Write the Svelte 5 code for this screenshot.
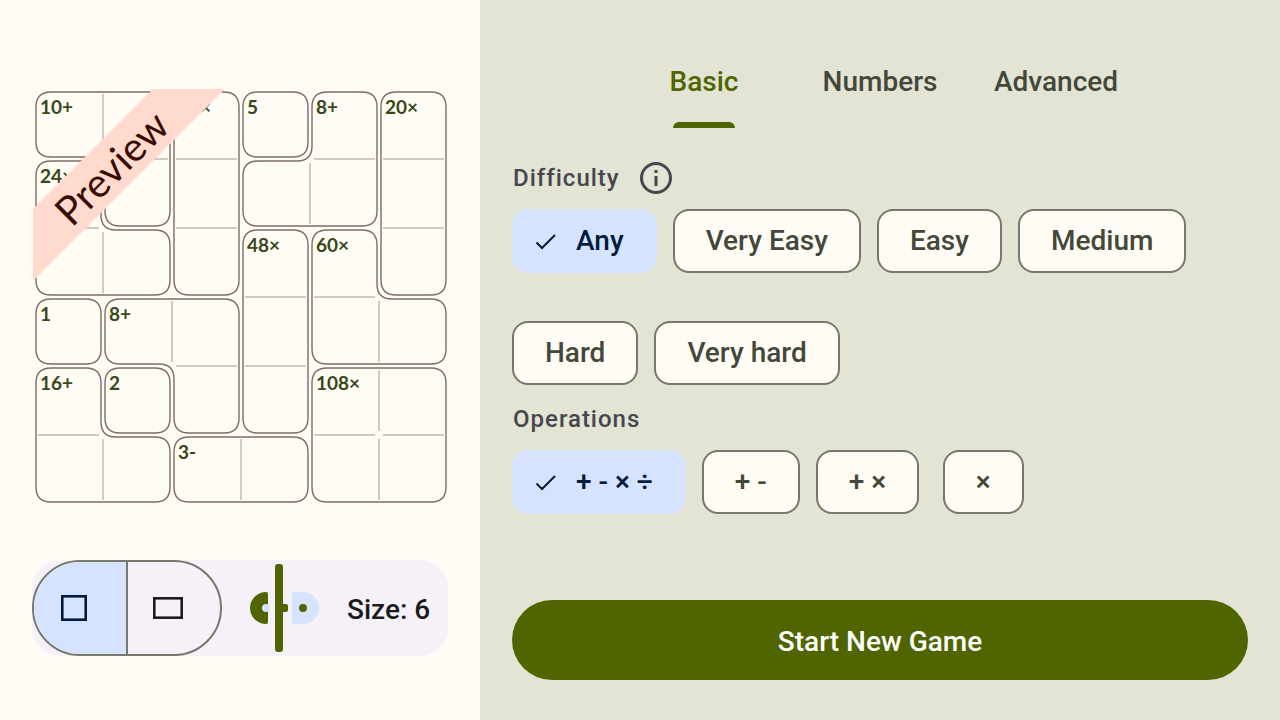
<script>
  const STEP = 69;
  const RADIUS = 15;

  // Cage corners in half-cell units: even = near edge of a cell, odd = far edge.
  const cages = [
    { label: '10+', at: [0, 0], corners: [[0, 0], [3, 0], [3, 3], [2, 3], [2, 1], [0, 1]] },
    { label: '24×', at: [0, 1], corners: [[0, 2], [1, 2], [1, 4], [3, 4], [3, 5], [0, 5]] },
    { label: '40×', at: [2, 0], corners: [[4, 0], [5, 0], [5, 5], [4, 5]] },
    { label: '5', at: [3, 0], corners: [[6, 0], [7, 0], [7, 1], [6, 1]] },
    { label: '8+', at: [4, 0], corners: [[8, 0], [9, 0], [9, 3], [6, 3], [6, 2], [8, 2]] },
    { label: '20×', at: [5, 0], corners: [[10, 0], [11, 0], [11, 5], [10, 5]] },
    { label: '48×', at: [3, 2], corners: [[6, 4], [7, 4], [7, 9], [6, 9]] },
    { label: '60×', at: [4, 2], corners: [[8, 4], [9, 4], [9, 6], [11, 6], [11, 7], [8, 7]] },
    { label: '1', at: [0, 3], corners: [[0, 6], [1, 6], [1, 7], [0, 7]] },
    { label: '8+', at: [1, 3], corners: [[2, 6], [5, 6], [5, 9], [4, 9], [4, 7], [2, 7]] },
    { label: '16+', at: [0, 4], corners: [[0, 8], [1, 8], [1, 10], [3, 10], [3, 11], [0, 11]] },
    { label: '2', at: [1, 4], corners: [[2, 8], [3, 8], [3, 9], [2, 9]] },
    { label: '108×', at: [4, 4], corners: [[8, 8], [11, 8], [11, 11], [8, 11]] },
    { label: '3-', at: [2, 5], corners: [[4, 10], [7, 10], [7, 11], [4, 11]] }
  ];
  const verticals = [[1, 0], [1, 2], [4, 1], [2, 3], [5, 3], [5, 4], [5, 5], [1, 5], [3, 5]];
  const horizontals = [
    [1, 1], [2, 1], [2, 2], [0, 2], [4, 1], [5, 1], [5, 2],
    [3, 3], [3, 4], [4, 3], [2, 4], [0, 5], [4, 5], [5, 5]
  ];

  const edge = (n) => Math.floor(n / 2) * STEP + (n % 2 ? 69 : 4);

  function outline(corners) {
    const pts = corners.map(([x, y]) => [edge(x), edge(y)]);
    const toward = (a, b) => [
      a[0] + Math.sign(b[0] - a[0]) * RADIUS,
      a[1] + Math.sign(b[1] - a[1]) * RADIUS
    ];
    return (
      pts
        .map((p, i) => {
          const before = toward(p, pts[(i + pts.length - 1) % pts.length]);
          const after = toward(p, pts[(i + 1) % pts.length]);
          return `${i ? 'L' : 'M'}${before} Q${p} ${after}`;
        })
        .join(' ') + ' Z'
    );
  }

  const tabs = ['Basic', 'Numbers', 'Advanced'];
  const difficulties = ['Any', 'Very Easy', 'Easy', 'Medium', 'Hard', 'Very hard'];
  const operations = ['+ - × ÷', '+ -', '+ ×', '×'];

  let tab = $state('Basic');
  let difficulty = $state('Any');
  let operation = $state('+ - × ÷');
  let shape = $state('square');
  let size = $state(6);
</script>

{#snippet chip(text, selected, choose)}
  <li>
    <button class="chip" class:selected aria-pressed={selected} onclick={choose}>
      {#if selected}
        <svg class="check" viewBox="0 0 36 36" aria-hidden="true">
          <path d="M8.500 19.500 L14 25 L27 12" />
        </svg>
      {/if}
      {text}
    </button>
  </li>
{/snippet}

<main>
  <section class="preview">
    <svg class="board" viewBox="0 0 416 416" role="img" aria-label="Preview">
      {#each verticals as [c, r]}
        <path class="grid" d="M{2 + c * STEP} {6 + r * STEP} v61" />
      {/each}
      {#each horizontals as [c, r]}
        <path class="grid" d="M{6 + c * STEP} {2 + r * STEP} h61" />
      {/each}
      {#each cages as cage}
        <path class="cage" d={outline(cage.corners)} />
        <text class="clue" x={8 + cage.at[0] * STEP} y={26 + cage.at[1] * STEP}>{cage.label}</text>
      {/each}
      <path class="ribbon" d="M121 1 H193 L1 193 V121 Z" />
      <text class="banner" transform="translate(40 140) rotate(-45)">Preview</text>
    </svg>

    <div class="tools">
      <div class="shapes">
        <button class:on={shape === 'square'} aria-label="Square" onclick={() => (shape = 'square')}>
          <svg viewBox="0 0 32 32" aria-hidden="true"><rect x="4.300" y="4.300" width="23.400" height="23.400" /></svg>
        </button>
        <button class:on={shape === 'wide'} aria-label="Rectangle" onclick={() => (shape = 'wide')}>
          <svg viewBox="0 0 32 32" aria-hidden="true"><rect x="2.300" y="6.300" width="27.400" height="19.400" /></svg>
        </button>
      </div>
      <div class="slider">
        <svg viewBox="0 0 72 96" aria-hidden="true">
          <path class="dark" d="M16 32 H16 Q18 32 18 34 V62 Q18 64 16 64 A16 16 0 0 1 16 32 Z" />
          <circle class="light" cx="16" cy="48" r="4" />
          <path class="light" d="M44 32 H53 A16 16 0 0 1 53 64 H44 Q42 64 42 62 V34 Q42 32 44 32 Z" />
          <rect class="dark" x="30" y="44" width="8" height="8" rx="2" />
          <circle class="dark" cx="53" cy="48" r="4" />
          <rect class="dark" x="25" y="4" width="8" height="88" rx="3" />
        </svg>
        <input id="size" type="range" min="3" max="9" bind:value={size} />
      </div>
      <label for="size">Size: {size}</label>
    </div>
  </section>

  <section class="options">
    <div class="tabs" role="tablist">
      {#each tabs as name}
        <button role="tab" class:active={tab === name} aria-selected={tab === name} onclick={() => (tab = name)}>
          {name}
        </button>
      {/each}
    </div>

    <div class="heading">
      <h2>Difficulty</h2>
      <button class="info" aria-label="About difficulty">
        <svg viewBox="0 0 32 32" aria-hidden="true">
          <circle class="ring" cx="16" cy="16" r="14.500" />
          <rect x="14.500" y="14" width="3" height="10" />
          <rect x="14.500" y="8" width="3" height="3" />
        </svg>
      </button>
    </div>
    <ul class="chips">
      {#each difficulties as name}
        {@render chip(name, difficulty === name, () => (difficulty = name))}
      {/each}
    </ul>

    <div class="heading second">
      <h2>Operations</h2>
    </div>
    <ul class="chips">
      {#each operations as name}
        {@render chip(name, operation === name, () => (operation = name))}
      {/each}
    </ul>

    <button class="start">Start New Game</button>
  </section>
</main>

<style>
  :global(body) {
    margin: 0;
    background: #fffcf5;
  }

  main {
    display: grid;
    grid-template-columns: minmax(0, 3fr) minmax(0, 5fr);
    min-height: 100vh;
    font-family: Roboto, sans-serif;
    font-size: 28px;
    font-weight: 500;
    line-height: 40px;
  }

  button {
    margin: 0;
    padding: 0;
    border: 0;
    background: none;
    color: inherit;
    font: inherit;
    cursor: pointer;
  }

  svg {
    display: block;
  }

  .preview {
    display: flex;
    flex-direction: column;
    justify-content: space-between;
    gap: 32px;
    padding: 88px 32px 64px;
  }

  .board {
    width: 100%;
  }

  .grid {
    fill: none;
    stroke: #d2c8c4;
    stroke-width: 2;
  }

  .cage {
    fill: none;
    stroke: #806b69;
    stroke-width: 1.4;
  }

  .clue {
    fill: #394719;
    font: 700 19px Lato, sans-serif;
  }

  .ribbon {
    fill: #ffdacd;
  }

  .banner {
    fill: #3a0b01;
    font: 400 40px Lato, sans-serif;
  }

  .tools {
    display: flex;
    align-items: center;
    border-radius: 28px;
    background: #f6f1f9;
    color: #1b1b1f;
  }

  .shapes {
    box-sizing: border-box;
    display: flex;
    width: 190px;
    height: 96px;
    overflow: hidden;
    border: 2px solid #75786a;
    border-radius: 48px;
  }

  .shapes button {
    flex: 1;
    display: flex;
    align-items: center;
    padding-left: 24px;
  }

  .shapes button + button {
    border-left: 2px solid #75786a;
  }

  .shapes .on {
    background: #d6e3ff;
    color: #001b3e;
  }

  .shapes svg {
    width: 32px;
    height: 32px;
    fill: none;
    stroke: currentColor;
    stroke-width: 2.6;
  }

  .slider {
    position: relative;
    margin-left: 28px;
    width: 72px;
    height: 96px;
  }

  .slider input {
    position: absolute;
    inset: 0;
    width: 100%;
    height: 100%;
    margin: 0;
    opacity: 0;
  }

  .dark {
    fill: #4f6600;
  }

  .light {
    fill: #d6e3ff;
  }

  label {
    margin-left: 25px;
    padding-top: 4px;
    white-space: nowrap;
  }

  .options {
    display: flex;
    flex-direction: column;
    padding: 32px 32px 40px;
    background: #e3e4d3;
    color: #44483a;
  }

  .tabs {
    display: flex;
    justify-content: center;
    margin-bottom: 32px;
  }

  .tabs button {
    position: relative;
    width: 176px;
    height: 96px;
    padding-top: 4px;
  }

  .tabs .active {
    color: #4f6600;
  }

  .tabs .active::after {
    content: '';
    position: absolute;
    bottom: 0;
    left: 57px;
    right: 57px;
    height: 6px;
    border-radius: 6px 6px 0 0;
    background: #4f6600;
  }

  .heading {
    display: flex;
    align-items: center;
    gap: 20px;
    height: 36px;
    margin-bottom: 13px;
    padding-left: 1px;
    color: #47464f;
  }

  .second {
    margin-top: 16px;
  }

  h2 {
    margin: 0;
    font-size: 24px;
    font-weight: 500;
    line-height: 32px;
    letter-spacing: 1px;
  }

  .info svg {
    width: 32px;
    height: 32px;
    fill: currentColor;
  }

  .info .ring {
    fill: none;
    stroke: currentColor;
    stroke-width: 3;
  }

  .chips {
    display: flex;
    flex-wrap: wrap;
    gap: 48px 16px;
    margin: 0;
    padding: 0;
    list-style: none;
  }

  .chips li {
    display: flex;
    justify-content: center;
    min-width: 96px;
  }

  .chip {
    box-sizing: border-box;
    display: flex;
    align-items: center;
    height: 64px;
    padding: 0 31px;
    border: 2px solid #75786a;
    border-radius: 16px;
    background: #fffcf5;
    white-space: nowrap;
  }

  .chip.selected {
    gap: 12px;
    padding-left: 14px;
    border-color: #d6e3ff;
    background: #d6e3ff;
    color: #001b3e;
  }

  .check {
    width: 36px;
    height: 36px;
    fill: none;
    stroke: currentColor;
    stroke-width: 2;
  }

  .start {
    height: 80px;
    margin-top: auto;
    padding-top: 4px;
    border-radius: 40px;
    background: #4f6600;
    color: #fff;
  }
</style>
